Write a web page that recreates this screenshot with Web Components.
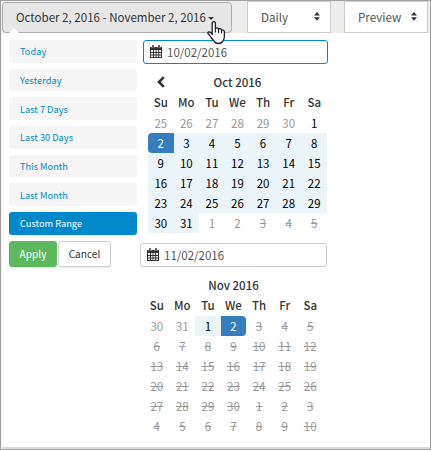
<!DOCTYPE html>
<html lang="en">
<head>
<meta charset="utf-8">
<title>Date range</title>
<style>
html,body{margin:0;height:100%}
body{font-family:"Noto Sans CJK SC","Open Sans",sans-serif;color:#333;overflow:hidden}
</style>
</head>
<body>
<report-page></report-page>
<script>
function define(name, html, setup) {
  customElements.define(name, class extends HTMLElement {
    connectedCallback() {
      if (this.shadowRoot) return;
      const t = document.createElement('template');
      t.innerHTML = html;
      this.attachShadow({mode: 'open'}).append(t.content.cloneNode(true));
      if (setup) setup(this, this.shadowRoot);
    }
  });
}

define('range-button', `<style>
:host{display:flex;box-sizing:border-box;position:relative;width:230px;height:31px;border:1px solid #adadad;border-radius:4px;background:#e6e6e6;align-items:center;padding:0 0 2px 13px;font-size:11.55px;line-height:18px;white-space:nowrap;color:#333}
i{width:0;height:0;border:3px solid transparent;border-top-color:#333;border-bottom:0;margin:3px 0 0 2px}
.tip{position:absolute;left:6px;top:25px;width:0;height:0;border:5px solid transparent;border-top:0;border-bottom-color:#fff}
.hand{position:absolute;left:203px;top:17px}
</style><span style="width:190px"><slot></slot></span><i></i><b class="tip"></b>
<svg class="hand" width="20" height="26" viewBox="0 0 20 26"><path d="M6.2 15V3.8Q6.2 1.7 7.8 1.7Q9.4 1.7 9.4 3.8V9Q9.9 7.8 11 7.9Q12.5 8 12.6 9.3Q13.1 8.5 14.1 8.7Q15.5 9 15.6 10.4Q16.2 9.8 17.2 10.2Q18.4 10.6 18.4 12V16.5Q18.4 18.8 16.9 21Q15.8 23.5 12.5 23.5Q9.2 23.5 8 21Q6.7 19.6 4.8 17Q3.3 14.8 2 13.6Q1.3 12.3 2.8 11.8Q4.6 11.8 6.2 14" fill="#fff" stroke="#1c1c2c" stroke-width="1.3" stroke-linejoin="round"/><path d="M9.4 8.5V12.5M12.6 9.3V13M15.6 10.4V13.4" stroke="#1c1c2c" stroke-width="1.1"/></svg>`);

define('select-box', `<style>
:host{display:flex;box-sizing:border-box;width:84px;height:32px;border:1px solid #ccc;background:#fff;align-items:center;justify-content:space-between;padding:0 10px 1px 13px;font-size:11.6px;line-height:18px;color:#555}
</style><slot></slot><svg width="6" height="9" viewBox="0 0 6 9"><path d="M3 0L6 3.5H0ZM0 5.3H6L3 8.8Z" fill="#333"/></svg>`);

define('range-item', `<style>
:host{display:flex;box-sizing:border-box;height:22.5px;border-radius:3px;background:#f5f5f5;color:#08c;align-items:center;padding-left:11px;font-size:9.25px;line-height:14px}
:host([active]){background:#08c;color:#fff}
</style><slot></slot>`);

define('action-button', `<style>
:host{display:flex;box-sizing:border-box;height:26px;border:1px solid #ccc;border-radius:3px;background:#fff;color:#333;align-items:center;justify-content:center;font-size:10.1px;line-height:16px;box-shadow:0 1px 1px #0001}
:host([primary]){background:#5cb85c;border-color:#5cb85c;color:#fff}
</style><slot></slot>`);

define('date-field', `<style>
:host{display:flex;box-sizing:border-box;height:24px;border:1px solid #ccc;border-radius:3px;background:#fff;align-items:center;padding:0 0 1px 6px;gap:5px;font-size:11.5px;line-height:18px;color:#555}
:host([active]){border-color:#08c}
svg{margin-top:-1px}
</style><svg width="12" height="13" viewBox="0 0 12 13"><path d="M0 2H12V13H0Z" fill="#333"/><path d="M1 5H3V7H1ZM4 5H5.6V7H4ZM6.5 5H8.2V7H6.5ZM9.2 5H11V7H9.2ZM1 8H3V9.5H1ZM4 8H5.6V9.5H4ZM6.5 8H8.2V9.5H6.5ZM9.2 8H11V9.5H9.2ZM1 10.5H3V12H1ZM4 10.5H5.6V12H4ZM6.5 10.5H8.2V12H6.5ZM9.2 10.5H11V12H9.2Z" fill="#fff"/><path d="M3 .7V3M9 .7V3" stroke="#fff" stroke-width="2.6"/><path d="M3 0V3.3M9 0V3.3" stroke="#333" stroke-width="1.5"/></svg><slot></slot>`);

define('month-grid', `<style>
:host{display:grid;width:179px;grid-template-columns:repeat(7,1fr);grid-auto-rows:20px;font-size:11.5px;text-align:center;line-height:20px;color:#000}
b{font-weight:500;color:#333;position:relative;top:-1px}
.t{grid-column:2/7}
.back{display:flex;align-items:center;justify-content:center;padding-bottom:2px}
.o,.x{color:#999}.x{text-decoration:line-through}
.r{background:#ebf4f8}
.s{background:#357ebd;color:#fff}
.s.first{border-radius:4px 0 0 4px}.s.last{border-radius:0 4px 4px 0}
</style>`, (el, root) => {
  const add = (text, cls, tag = 'span') => {
    const c = document.createElement(tag);
    c.textContent = text; c.className = cls; root.append(c); return c;
  };
  const back = add('', 'back');
  if (el.hasAttribute('back')) back.innerHTML = '<svg width="10" height="12" viewBox="0 0 10 12"><path d="M7.8 1.2L3 6L7.8 10.8" fill="none" stroke="#333" stroke-width="2.6"/></svg>';
  add(el.getAttribute('month'), 't', 'b'); add('', '');
  for (const d of ['Su','Mo','Tu','We','Th','Fr','Sa']) add(d, '', 'b');
  const names = {o:'o', x:'x', r:'r', f:'s first', l:'s last', n:''};
  for (const run of el.getAttribute('days').split(' ')) {
    const [, k, a, z] = run.match(/([a-z])(\d+)-?(\d*)/);
    for (let i = +a; i <= +(z || a); i++) add(i, names[k]);
  }
});

define('report-page', `<style>
:host{display:flex;flex-direction:column;box-sizing:border-box;width:431px;height:450px;border:1px solid #a0a0a0;background:#fff}
header{display:flex;height:32px;background:#eeedec;padding-left:1px;align-items:flex-start}
range-button{margin-top:1px;margin-right:15px;z-index:1}
select-box+select-box{margin-left:13px}
main{display:flex;flex:1;border-left:1px solid #eee;border-bottom:2px solid #dcdcdc;border-bottom-left-radius:3px}
nav{width:128px;margin:7px 0 0 7px;display:flex;flex-direction:column;gap:6.2px}
.actions{display:flex;gap:1px}
section{width:188px;margin:7px 0 0 3px}
.a{margin-left:3px;width:185px}.b{margin-top:10px;width:187px}
.m1{margin:9px 0 0 8px}.m2{margin:9px 0 0 4px}
</style>
<header><range-button>October 2, 2016 - November 2, 2016</range-button><select-box>Daily</select-box><select-box>Preview</select-box></header>
<main><nav><range-item>Today</range-item><range-item>Yesterday</range-item><range-item>Last 7 Days</range-item><range-item>Last 30 Days</range-item><range-item>This Month</range-item><range-item>Last Month</range-item><range-item active>Custom Range</range-item>
<div class="actions"><action-button primary style="width:48px">Apply</action-button><action-button style="width:53px">Cancel</action-button></div></nav>
<section><date-field class="a" active>10/02/2016</date-field>
<month-grid class="m1" back month="Oct 2016" days="o25-30 n1 f2 r3-31 o1-2 x3-5"></month-grid>
<date-field class="b">11/02/2016</date-field>
<month-grid class="m2" month="Nov 2016" days="o30-31 r1 l2 x3-30 x1-10"></month-grid></section></main>`);
</script>
</body>
</html>
